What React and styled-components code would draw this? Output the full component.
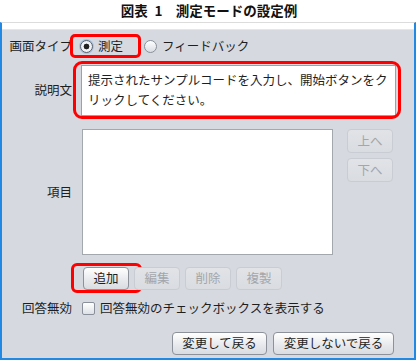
import React from "react";
import styled, { createGlobalStyle } from "styled-components";

const Global = createGlobalStyle`
  html, body { margin: 0; padding: 0; background: #ffffff; }
  body { font-family: "Noto Sans CJK JP", "Noto Sans", sans-serif; }
`;

const Page = styled.div`
  width: 416px;
  height: 360px;
  display: flex;
  flex-direction: column;
  background: #ffffff;
`;

const Title = styled.div`
  height: 22px;
  display: flex;
  align-items: center;
  justify-content: center;
  font-size: 13.5px;
  font-weight: 700;
  color: #111;
  white-space: pre;
  line-height: 1;
  padding-left: 2px;
`;

const Window = styled.div`
  flex: 1;
  display: flex;
  flex-direction: column;
  border-top: 1px solid #dcdcdc;
  border-left: 2px solid #2189e4;
  border-right: 2px solid #2189e4;
  border-bottom: 2px solid #2189e4;
`;

const TopStrip = styled.div`
  height: 6px;
  background: #ffffff;
  border-bottom: 1px solid #e4e6ea;
`;

const Panel = styled.div`
  flex: 1;
  background: #d6d9df;
  padding: 4px 18px 0 6px;
  display: flex;
  flex-direction: column;
  color: #1e1e1e;
  font-size: 12.5px;
`;

const Row = styled.div`
  display: grid;
  grid-template-columns: 64px 1fr;
  column-gap: 9px;
  align-items: center;
  margin-top: ${(p) => p.$mt || 0}px;
  min-height: ${(p) => p.$h || 0}px;
`;

const Label = styled.div`
  text-align: right;
  white-space: nowrap;
  line-height: 1;
`;

const Cell = styled.div`
  position: relative;
  display: flex;
  align-items: ${(p) => p.$align || "center"};
  justify-content: ${(p) => p.$justify || "flex-start"};
  gap: ${(p) => p.$gap || 0}px;
  height: ${(p) => (p.$h ? `${p.$h}px` : "auto")};
`;

const Highlight = styled.span`
  position: absolute;
  top: ${(p) => p.$t}px;
  left: ${(p) => p.$l}px;
  right: ${(p) => p.$r}px;
  bottom: ${(p) => p.$b}px;
  border: 3px solid #ff0000;
  border-radius: ${(p) => p.$rad || 6}px;
  pointer-events: none;
`;

const RadioOption = styled.label`
  display: flex;
  align-items: center;
  gap: 5px;
  margin-left: ${(p) => p.$ml || 0}px;
  line-height: 1;
  white-space: nowrap;
`;

const RadioCircle = styled.span`
  width: 13px;
  height: 13px;
  box-sizing: border-box;
  border-radius: 50%;
  border: 1px solid ${(p) => (p.$on ? "#55606e" : "#8a9099")};
  background: ${(p) =>
    p.$on
      ? "radial-gradient(circle, #222 0 2.6px, #f4f6f9 3.2px, #dfe3e9 100%)"
      : "linear-gradient(#ffffff, #d9dde3)"};
  box-shadow: ${(p) => (p.$on ? "0 0 0 1px #a8c4e4" : "none")};
  flex: none;
`;

const TextBox = styled.div`
  flex: 1;
  height: 51px;
  box-sizing: border-box;
  background: #ffffff;
  border: 1px solid #9ca0a7;
  padding: 4px 6px;
  line-height: 20px;
  font-size: 12.5px;
  color: #1e1e1e;
`;

const ListBox = styled.div`
  width: 251px;
  height: 126px;
  box-sizing: border-box;
  margin-left: 1px;
  background: #ffffff;
  border: 1px solid #a3a7ae;
`;

const SideButtons = styled.div`
  display: flex;
  flex-direction: column;
  gap: 5px;
  margin-left: 14px;
`;

const Button = styled.button`
  width: ${(p) => p.$w || 46}px;
  height: ${(p) => p.$h || 23}px;
  box-sizing: border-box;
  padding: 0;
  font-family: inherit;
  font-size: 12.5px;
  line-height: 1;
  border-radius: 4px;
  border: 1px solid ${(p) => (p.disabled ? "#c9ccd2" : "#8d9199")};
  color: ${(p) => (p.disabled ? "#a3a6ab" : "#1e1e1e")};
  background: ${(p) =>
    p.disabled
      ? "linear-gradient(#e1e3e7, #d9dce1)"
      : "linear-gradient(#ffffff, #e6e8ec 60%, #d9dce1)"};
  position: relative;
  flex: none;
`;

const CheckBox = styled.span`
  width: 13px;
  height: 13px;
  box-sizing: border-box;
  border-radius: 2px;
  border: 1px solid #8a9099;
  background: linear-gradient(#ffffff, #dde1e6);
  flex: none;
`;

const CheckOption = styled.label`
  display: flex;
  align-items: center;
  gap: 5px;
  margin-left: 1px;
  white-space: nowrap;
  line-height: 1;
`;

export default function App() {
  return (
    <>
      <Global />
      <Page>
        <Title>{"図表\u20021\u3000測定モードの設定例"}</Title>
        <Window>
          <TopStrip />
          <Panel>
            <Row $h={24}>
              <Label>画面タイプ</Label>
              <Cell $h={24}>
                <RadioOption $ml={-1}>
                  <RadioCircle $on />
                  測定
                </RadioOption>
                <RadioOption $ml={21}>
                  <RadioCircle />
                  フィードバック
                </RadioOption>
                <Highlight $t={0} $l={-11} $r={255} $b={0} $rad={5} />
              </Cell>
            </Row>
            <Row $mt={7}>
              <Label>説明文</Label>
              <Cell>
                <TextBox>
                  提示されたサンプルコードを入力し、開始ボタンをクリックしてください。
                </TextBox>
                <Highlight $t={-4} $l={-8} $r={-5} $b={-3} $rad={9} />
              </Cell>
            </Row>
            <Row $mt={13}>
              <Label>項目</Label>
              <Cell $align="flex-start">
                <ListBox />
                <SideButtons>
                  <Button disabled $h={24}>上へ</Button>
                  <Button disabled $h={24}>下へ</Button>
                </SideButtons>
              </Cell>
            </Row>
            <Row $mt={12}>
              <span />
              <Cell $gap={5}>
                <Button style={{ marginLeft: 2 }}>
                  追加
                  <Highlight $t={-5} $l={-13} $r={-14} $b={-4} $rad={6} />
                </Button>
                <Button disabled>編集</Button>
                <Button disabled>削除</Button>
                <Button disabled>複製</Button>
              </Cell>
            </Row>
            <Row $mt={9} $h={18}>
              <Label>回答無効</Label>
              <Cell>
                <CheckOption>
                  <CheckBox />
                  回答無効のチェックボックスを表示する
                </CheckOption>
              </Cell>
            </Row>
            <Row $mt={15}>
              <span />
              <Cell $gap={6} $justify="flex-end">
                <Button $w={95}>変更して戻る</Button>
                <Button $w={121} style={{ marginRight: 2 }}>
                  変更しないで戻る
                </Button>
              </Cell>
            </Row>
          </Panel>
        </Window>
      </Page>
    </>
  );
}
